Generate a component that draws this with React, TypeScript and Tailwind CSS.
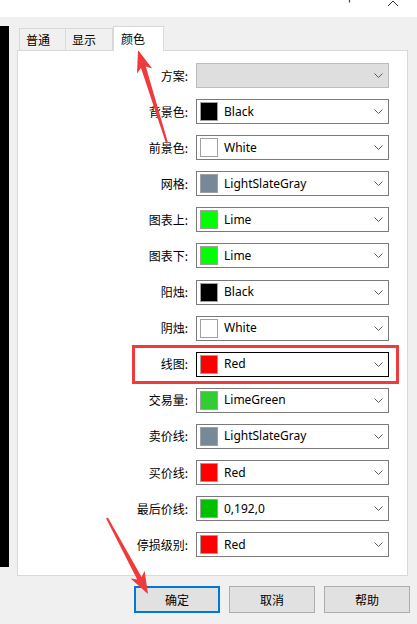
import React from "react";

type Row = { label: string; name?: string; color?: string; disabled?: boolean; focus?: boolean };

const rows: Row[] = [
  { label: "方案:", disabled: true },
  { label: "背景色:", name: "Black", color: "#000000" },
  { label: "前景色:", name: "White", color: "#ffffff" },
  { label: "网格:", name: "LightSlateGray", color: "#778899" },
  { label: "图表上:", name: "Lime", color: "#00ff00" },
  { label: "图表下:", name: "Lime", color: "#00ff00" },
  { label: "阳烛:", name: "Black", color: "#000000" },
  { label: "阴烛:", name: "White", color: "#ffffff" },
  { label: "线图:", name: "Red", color: "#ff0000", focus: true },
  { label: "交易量:", name: "LimeGreen", color: "#32cd32" },
  { label: "卖价线:", name: "LightSlateGray", color: "#778899" },
  { label: "买价线:", name: "Red", color: "#ff0000" },
  { label: "最后价线:", name: "0,192,0", color: "#00c000" },
  { label: "停损级别:", name: "Red", color: "#ff0000" },
];

const cjk = { fontFamily: '"Noto Sans CJK SC", "Noto Sans", sans-serif' };

function Chevron() {
  return (
    <svg width="9" height="5" viewBox="0 0 9 5" className="shrink-0">
      <path d="M0.5 0.5 L4.5 4.5 L8.5 0.5" fill="none" stroke="#5a5a5a" strokeWidth="1" />
    </svg>
  );
}

function Combo({ row }: { row: Row }) {
  const border = row.disabled ? "border-[#bcbcbc] bg-[#dedede]" : row.focus ? "border-black bg-white" : "border-[#7a7a7a] bg-white";
  return (
    <div className={`w-[193px] h-[25px] border ${border} flex items-center pl-[3px] pr-[5px]`}>
      {row.color ? (
        <div className="w-[18px] h-[19px] border border-[#a0a0a0] shrink-0" style={{ backgroundColor: row.color }} />
      ) : null}
      <span className="flex-1 pl-[6px] text-[12px] text-black leading-none" style={{ fontFamily: '"Noto Sans", sans-serif' }}>
        {row.name}
      </span>
      <Chevron />
    </div>
  );
}

// help / close buttons of the title bar, cut off at the top edge
function TitleGlyphs() {
  return (
    <svg width="60" height="17" viewBox="0 0 60 17">
      <path d="M3.5 0 L3.5 2.5" stroke="#444" strokeWidth="1.2" fill="none" />
      <path d="M42 6 L47 1 L52 6" stroke="#333" strokeWidth="1" fill="none" />
    </svg>
  );
}

function Arrows() {
  return (
    <svg width="417" height="624" className="absolute left-0 top-0 pointer-events-none">
      <polygon
        fill="#ef3b3b"
        points="168,142.7 145.8,66.5 152.2,68.6 138,50 137,73.4 141,67.9 166,143.3"
      />
      <polygon
        fill="#ef3b3b"
        points="107.9,517.5 141.6,577 144.6,570.8 148,594 130.6,578.4 137.2,579.4 106.1,518.5"
      />
    </svg>
  );
}

export default function App() {
  return (
    <div className="relative w-[417px] h-[624px] bg-[#f0f0f0] overflow-hidden flex flex-col" style={cjk}>
      {/* title bar, mostly cut off */}
      <div className="h-[17px] bg-white flex justify-end pr-[11px]">
        <TitleGlyphs />
      </div>

      <div className="flex h-[559px]">
        <div className="w-[9px] h-[541px] mt-[9px] bg-black" />
        <div className="ml-[8px] w-[391px] flex flex-col">
          {/* tabs */}
          <div className="h-[33px] flex items-end pl-[2px] text-[12px] text-black">
            <div className="w-[47px] h-[22px] border border-b-0 border-[#d9d9d9] bg-[#f0f0f0] pl-[6px] flex items-center">普通</div>
            <div className="w-[47px] h-[22px] border border-b-0 border-l-0 border-[#d9d9d9] bg-[#f0f0f0] pl-[6px] flex items-center">显示</div>
            <div className="w-[51px] h-[25px] -mb-px z-10 border border-b-0 border-[#d9d9d9] bg-white pl-[7px] flex items-center">颜色</div>
          </div>
          {/* panel */}
          <div className="flex-1 border border-[#d9d9d9] bg-white pt-[12px] flex flex-col gap-[11.1px]">
            {rows.map((row, i) => (
              <div key={i} className="relative flex items-center h-[25px]">
                {row.focus ? (
                  <div className="absolute left-[114px] -top-[7px] w-[267px] h-[39px] border-[3px] border-[#ef3b3b]" />
                ) : null}
                <div className="w-[170px] text-right text-[12px] text-black">{row.label}</div>
                <div className="ml-[8px]">
                  <Combo row={row} />
                </div>
              </div>
            ))}
          </div>
        </div>
      </div>

      {/* buttons */}
      <div className="flex justify-end gap-[9px] pr-[7px] pt-[10px] text-[12px] text-black">
        <button className="w-[86px] h-[27px] bg-[#e1e1e1] border-2 border-[#0078d7]">确定</button>
        <button className="w-[86px] h-[27px] bg-[#e1e1e1] border border-[#adadad]">取消</button>
        <button className="w-[86px] h-[27px] bg-[#e1e1e1] border border-[#adadad]">帮助</button>
      </div>

      <Arrows />
    </div>
  );
}
